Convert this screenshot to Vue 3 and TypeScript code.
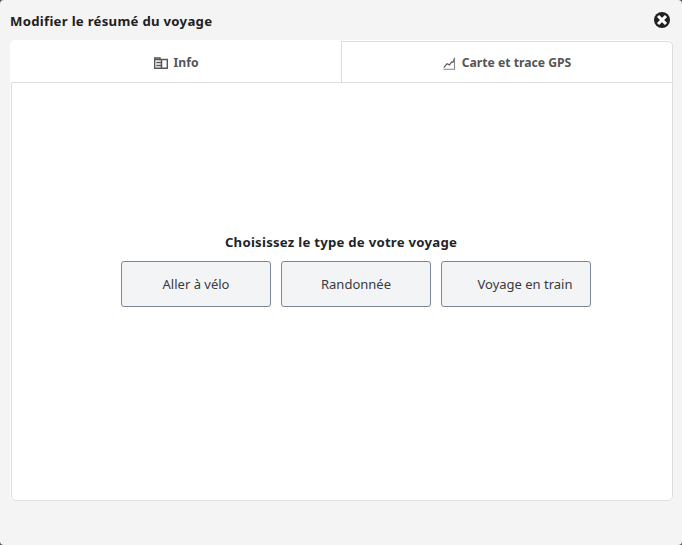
<script setup lang="ts">
import { ref } from 'vue'

type TabId = 'info' | 'map'

const active = ref<TabId>('info')
const trips: { id: string; label: string }[] = [
  { id: 'bike', label: 'Aller à vélo' },
  { id: 'hike', label: 'Randonnée' },
  { id: 'train', label: 'Voyage en train' },
]
</script>

<template>
  <div class="backdrop">
    <section class="dialog">
      <header class="header">
        <h1 class="title">Modifier le résumé du voyage</h1>
        <button class="close" type="button">
          <svg width="16" height="16" viewBox="0 0 16 16">
            <circle cx="8" cy="8" r="8" fill="#212121" />
            <path d="M5.1 5.1l5.8 5.8M10.9 5.1l-5.8 5.8" stroke="#fff" stroke-width="3" stroke-linecap="square" />
          </svg>
        </button>
      </header>
      <div class="panel">
        <nav class="tabs">
          <button class="tab" :class="{ idle: active !== 'info' }" type="button" @click="active = 'info'">
            <svg class="icon-info" width="14" height="12" viewBox="0 0 14 12" fill="none" stroke="#57575a">
              <path d="M.7 11.2V1h5.3v1.5h7.3v8.7z" stroke-width="1.4" />
              <path d="M7.5 2v9M1 2.5h5" stroke-width="1.5" />
              <path d="M2.3 5.5h5M2.3 8.5h5" stroke-width="1.3" />
            </svg>
            <span class="label-info">Info</span>
          </button>
          <button class="tab" :class="{ idle: active !== 'map' }" type="button" @click="active = 'map'">
            <svg class="icon-map" width="13" height="13" viewBox="0 0 13 13" fill="none">
              <path d="M.8 10.6L4 6.8l2.5 1.1 2.2-3 1.3.3L11.7.8" stroke="#5f5d59" stroke-width="1.2" />
              <path d="M.5 12.2h11V1" stroke="#858580" stroke-width="1.1" />
            </svg>
            <span class="label-map">Carte et trace GPS</span>
          </button>
        </nav>
        <main class="content">
          <h2 class="question">Choisissez le type de votre voyage</h2>
          <div class="choices">
            <button v-for="trip in trips" :key="trip.id" class="choice" :class="trip.id" type="button">
              <span>{{ trip.label }}</span>
            </button>
          </div>
        </main>
      </div>
    </section>
  </div>
</template>

<style>
body {
  margin: 0;
}
</style>

<style scoped>
* {
  box-sizing: border-box;
}
button {
  font: inherit;
  padding: 0;
  border: 0;
  background: none;
}
.backdrop {
  width: 682px;
  height: 545px;
  background: #555;
  font-family: "Noto Sans", "Open Sans", sans-serif;
}
.dialog {
  height: 100%;
  padding: 0 9px 44px 10px;
  display: flex;
  flex-direction: column;
  background: #f4f4f4;
  border-radius: 4px;
}
.header {
  height: 40px;
  display: flex;
  align-items: center;
  justify-content: space-between;
  padding-right: 3px;
}
.title {
  margin: 2px 0 0;
  font-size: 13.2px;
  letter-spacing: 0.27px;
  font-weight: 700;
  line-height: 20px;
  white-space: nowrap;
  color: #212121;
}
.close {
  width: 16px;
  height: 16px;
  line-height: 0;
}
.panel {
  flex: 1;
  display: flex;
  flex-direction: column;
  background: #fff;
  border-radius: 5px;
}
.tabs {
  height: 42px;
  padding-top: 1px;
  display: flex;
}
.tab {
  width: 331px;
  padding: 2px 0 0 1px;
  display: flex;
  align-items: center;
  justify-content: center;
  color: #555;
  font-weight: 700;
  font-size: 12.2px;
  line-height: 18px;
  white-space: nowrap;
}
.tab svg {
  flex: none;
  margin-right: 6px;
}
.tab + .tab {
  width: 332px;
  padding-left: 0;
}
.idle {
  border: 1px solid #ddd;
  border-bottom: 0;
  border-top-right-radius: 5px;
}
.content {
  flex: 1;
  margin-left: 1px;
  border: 1px solid #ddd;
  border-radius: 0 0 5px 5px;
  padding-top: 149px;
}
.question {
  margin: 0;
  text-align: center;
  font-size: 13.2px;
  letter-spacing: 0.24px;
  font-weight: 700;
  line-height: 20px;
  color: #212529;
  padding-right: 2px;
}
.choices {
  display: flex;
  gap: 10px;
  padding: 9px 0 0 109px;
}
.choice {
  width: 150px;
  height: 46px;
  border: 1px solid #7a8794;
  border-radius: 3px;
  background: #f3f4f6;
  color: #373a3f;
  font-size: 13px;
  line-height: 20px;
  white-space: nowrap;
}
.train {
  padding-left: 18px;
}
</style>
